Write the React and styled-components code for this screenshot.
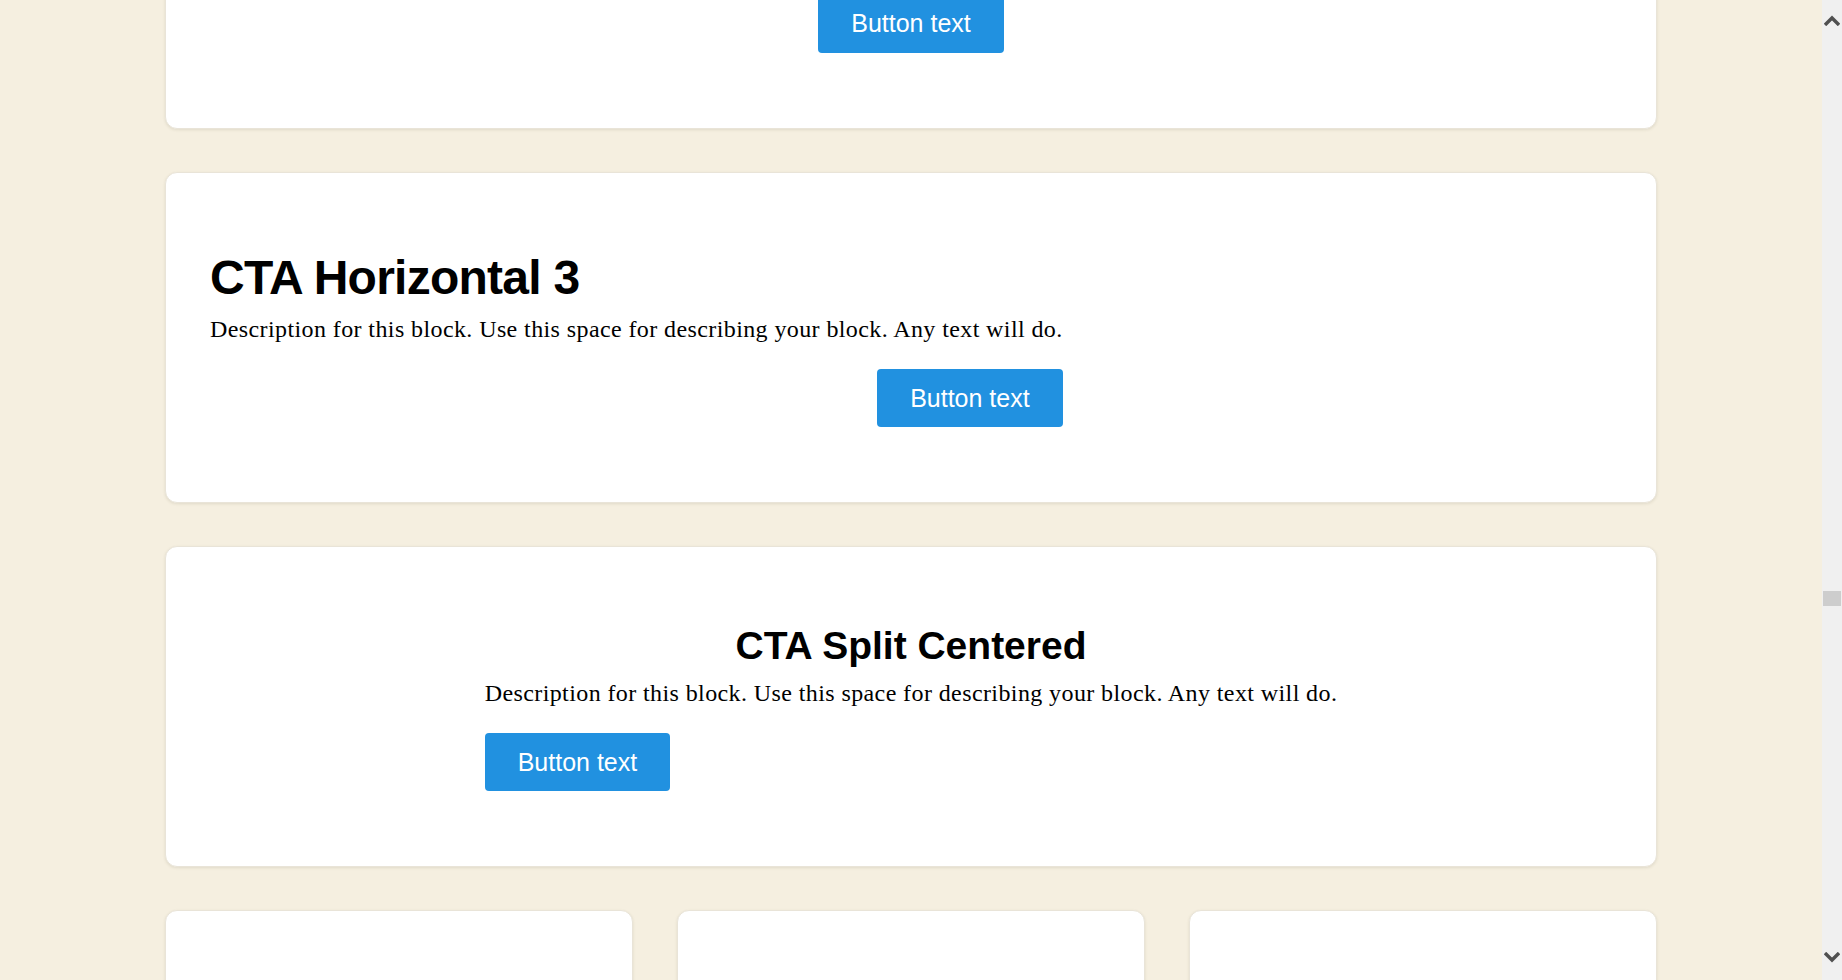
import React, { useLayoutEffect, useRef } from "react";
import styled, { createGlobalStyle } from "styled-components";

const GlobalStyle = createGlobalStyle`
  html, body {
    margin: 0;
    padding: 0;
    height: 100%;
    overflow: hidden;
    background: #f5efe0;
  }
  * { box-sizing: border-box; }
`;

const Shell = styled.div`
  display: flex;
  height: 100vh;
  width: 100vw;
`;

const Viewport = styled.div`
  flex: 1;
  height: 100%;
  overflow-y: scroll;
  scrollbar-width: none;
  &::-webkit-scrollbar { display: none; }
`;

const Page = styled.main`
  max-width: 1492px;
  margin: 0 auto;
  padding: 44px 0 120px;
  display: flex;
  flex-direction: column;
  gap: 43px;
`;

const Card = styled.section`
  background: #fff;
  border: 1px solid #e9e4d8;
  border-radius: 12px;
  box-shadow: 0 1px 3px rgba(80, 70, 40, 0.12);
  padding: 76px 44px 75px;
  display: flex;
  justify-content: ${(p) => (p.$center ? "center" : "flex-start")};
`;

const Block = styled.div`
  width: fit-content;
  display: flex;
  flex-direction: column;
  align-items: ${(p) => p.$align || "flex-start"};
`;

const Title = styled.h2`
  margin: 0 0 5px;
  font-family: "Liberation Sans", Arial, sans-serif;
  font-weight: 700;
  font-size: ${(p) => p.$size || 48}px;
  letter-spacing: ${(p) => (p.$tight ? "-0.75px" : "0")};
  line-height: 1.2;
  color: #000;
  align-self: ${(p) => p.$self || "auto"};
`;

const Desc = styled.p`
  margin: 0 0 22px;
  font-family: "Liberation Serif", "Times New Roman", serif;
  font-size: 24px;
  letter-spacing: 0.4px;
  line-height: 36px;
  color: #000;
  white-space: nowrap;
`;

const Button = styled.button`
  height: 58px;
  padding: 0 33px;
  border: none;
  border-radius: 4px;
  background: #2191e0;
  color: #fff;
  font-family: "Liberation Sans", Arial, sans-serif;
  font-size: 25px;
  cursor: pointer;
  align-self: ${(p) => p.$self || "auto"};
`;

const Grid = styled.div`
  display: grid;
  grid-template-columns: repeat(3, 1fr);
  gap: 44px;
`;

const SmallCard = styled(Card)`
  flex-direction: column;
  min-height: 300px;
`;

const Rail = styled.div`
  position: relative;
  width: 20px;
  height: 100%;
  background: #f0f0f0;
  display: flex;
  flex-direction: column;
  align-items: center;
  justify-content: space-between;
  padding: 15px 0 17px;
`;

const Thumb = styled.div`
  position: absolute;
  left: 1px;
  right: 1px;
  top: 591px;
  height: 15px;
  background: #cdcdcd;
`;

const Chevron = ({ down }) => (
  <svg width="16" height="11" viewBox="0 0 16 11">
    <path
      d={down ? "M1 1 L8 8 L15 1" : "M1 10 L8 3 L15 10"}
      fill="none"
      stroke="#505050"
      strokeWidth="3.4"
    />
  </svg>
);

const DESC = "Description for this block. Use this space for describing your block. Any text will do.";

export default function App() {
  const viewRef = useRef(null);
  const btnRef = useRef(null);

  useLayoutEffect(() => {
    // scroll so the first card's button ends 53px from the top, like the capture
    const b = btnRef.current.getBoundingClientRect().bottom;
    viewRef.current.scrollTop = b - 53;
  }, []);

  return (
    <>
      <GlobalStyle />
      <Shell>
        <Viewport ref={viewRef}>
          <Page>
            <Card $center>
              <Block $align="center">
                <Title $size={39}>CTA Centered</Title>
                <Desc>{DESC}</Desc>
                <Button ref={btnRef}>Button text</Button>
              </Block>
            </Card>

            <Card>
              <Block>
                <Title $tight>CTA Horizontal 3</Title>
                <Desc>{DESC}</Desc>
                <Button $self="flex-end">Button text</Button>
              </Block>
            </Card>

            <Card $center>
              <Block>
                <Title $size={39} $self="center">CTA Split Centered</Title>
                <Desc>{DESC}</Desc>
                <Button>Button text</Button>
              </Block>
            </Card>

            <Grid>
              {["Feature one", "Feature two", "Feature three"].map((t) => (
                <SmallCard key={t}>
                  <Title $size={28}>{t}</Title>
                  <Desc>Short text.</Desc>
                </SmallCard>
              ))}
            </Grid>
          </Page>
        </Viewport>
        <Rail>
          <Chevron />
          <Thumb />
          <Chevron down />
        </Rail>
      </Shell>
    </>
  );
}
